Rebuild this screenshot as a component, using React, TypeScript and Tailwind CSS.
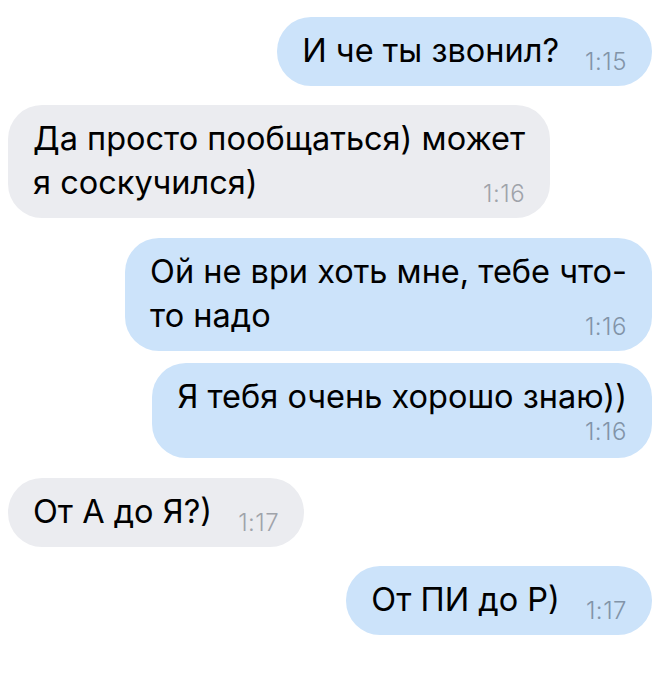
type Msg = {
  out: boolean;
  lines: string[];
  time: string;
  timeBelow?: boolean;
  gap: string;
};

const messages: Msg[] = [
  { out: true, lines: ["И че ты звонил?"], time: "1:15", gap: "mt-[17px]" },
  { out: false, lines: ["Да просто пообщаться) может", "я соскучился)"], time: "1:16", gap: "mt-[19px]" },
  { out: true, lines: ["Ой не ври хоть мне, тебе что-", "то надо"], time: "1:16", gap: "mt-[20px]" },
  { out: true, lines: ["Я тебя очень хорошо знаю))"], time: "1:16", timeBelow: true, gap: "mt-[12px]" },
  { out: false, lines: ["От А до Я?)"], time: "1:17", gap: "mt-[20px]" },
  { out: true, lines: ["От ПИ до Р)"], time: "1:17", gap: "mt-[19px]" },
];

const Bubble = ({ m }: { m: Msg }) => {
  const head = m.lines.slice(0, -1);
  const last = m.lines[m.lines.length - 1];
  const timeCls = m.out ? "text-[#8294a8]" : "text-[#9fa3aa]";

  return (
    <div className={`flex ${m.out ? "justify-end pr-[12px]" : "justify-start pl-[8px]"} ${m.gap}`}>
      <div
        className={`rounded-[34px] pl-[25px] pr-[25px] pt-[12px] pb-[13px] ${
          m.out ? "bg-[#cce3fa]" : "bg-[#ebecf0]"
        }`}
      >
        {head.map((l, i) => (
          <div key={i} className="text-[32.5px] leading-[44px] whitespace-nowrap">
            {l}
          </div>
        ))}
        {m.timeBelow ? (
          <>
            <div className="text-[32.5px] leading-[44px] whitespace-nowrap">{last}</div>
            <div className={`text-right text-[24px] font-light tracking-[0.5px] leading-[26px] ${timeCls}`}>
              {m.time}
            </div>
          </>
        ) : (
          <div className="flex items-baseline">
            <span className="text-[32.5px] leading-[44px] whitespace-nowrap">{last}</span>
            <span
              className={`ml-auto pl-[26px] text-[24px] font-light tracking-[0.5px] leading-none translate-y-[8px] ${timeCls}`}
            >
              {m.time}
            </span>
          </div>
        )}
      </div>
    </div>
  );
};

export default function App() {
  return (
    <div className="w-[664px] h-[694px] bg-white text-black font-['Inter','Roboto',sans-serif] overflow-hidden">
      {messages.map((m, i) => (
        <Bubble key={i} m={m} />
      ))}
    </div>
  );
}
